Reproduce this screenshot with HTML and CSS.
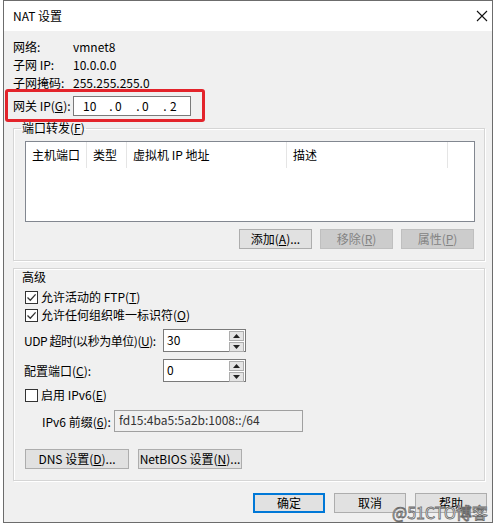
FILE: index.html
```html
<!DOCTYPE html>
<html lang="zh-CN">
<head>
<meta charset="utf-8">
<title>NAT 设置</title>
<link rel="stylesheet" href="styles.css">
</head>
<body>
<div class="window">
  <div class="titlebar">
    <span class="title">NAT 设置</span>
    <svg class="close" width="12" height="12" viewBox="0 0 12 12"><path d="M1 1 L11 11 M11 1 L1 11" stroke="#111" stroke-width="1.1" fill="none"/></svg>
  </div>
  <div class="content">
    <div class="info">
      <span>网络:</span><span>vmnet8</span>
      <span>子网 IP:</span><span>10.0.0.0</span>
      <span>子网掩码:</span><span>255.255.255.0</span>
    </div>
    <div class="gateway">
      <span class="glabel">网关 IP(<u>G</u>):</span>
      <div class="ipbox">
        <span class="o1">10</span><span class="d1">.</span><span class="o2">0</span><span class="d2">.</span><span class="o3">0</span><span class="d3">.</span><span class="o4">2</span>
      </div>
    </div>
    <fieldset class="group ports">
      <legend>端口转发(<u>F</u>)</legend>
      <div class="list">
        <div class="lhead">
          <span class="c1">主机端口</span><span class="c2">类型</span><span class="c3">虚拟机 IP 地址</span><span class="c4">描述</span>
        </div>
      </div>
      <div class="btnrow">
        <button class="btn">添加(<u>A</u>)...</button>
        <button class="btn disabled">移除(<u>R</u>)</button>
        <button class="btn disabled">属性(<u>P</u>)</button>
      </div>
    </fieldset>
    <div class="group advanced">
      <div class="glabel2">高级</div>
      <label class="check cb1"><span class="box"><svg width="11" height="11" viewBox="0 0 11 11"><path d="M1.5 5.5 L4.3 8.3 L9.6 2.4" stroke="#333" stroke-width="1.3" fill="none"/></svg></span>允许活动的 FTP(<u>T</u>)</label>
      <label class="check"><span class="box"><svg width="11" height="11" viewBox="0 0 11 11"><path d="M1.5 5.5 L4.3 8.3 L9.6 2.4" stroke="#333" stroke-width="1.3" fill="none"/></svg></span>允许任何组织唯一标识符(<u>O</u>)</label>
      <div class="spinrow udp">
        <span class="slabel tight">UDP 超时(以秒为单位)(<u>U</u>):</span>
        <div class="spin"><span class="sval">30</span><div class="arrows"><span class="arr"><svg width="7" height="4" viewBox="0 0 7 4"><path d="M0 4 L3.5 0 L7 4 Z" fill="#222"/></svg></span><span class="arr"><svg width="7" height="4" viewBox="0 0 7 4"><path d="M0 0 L3.5 4 L7 0 Z" fill="#222"/></svg></span></div></div>
      </div>
      <div class="spinrow port">
        <span class="slabel">配置端口(<u>C</u>):</span>
        <div class="spin"><span class="sval">0</span><div class="arrows"><span class="arr"><svg width="7" height="4" viewBox="0 0 7 4"><path d="M0 4 L3.5 0 L7 4 Z" fill="#222"/></svg></span><span class="arr"><svg width="7" height="4" viewBox="0 0 7 4"><path d="M0 0 L3.5 4 L7 0 Z" fill="#222"/></svg></span></div></div>
      </div>
      <label class="check cb3"><span class="box"></span>启用 IPv6(<u>E</u>)</label>
      <div class="prefixrow">
        <span class="plabel">IPv6 前缀(<u>6</u>):</span>
        <div class="pbox">fd15:4ba5:5a2b:1008::/64</div>
      </div>
      <div class="btnrow2">
        <button class="btn wide">DNS 设置(<u>D</u>)...</button>
        <button class="btn wide">NetBIOS 设置(<u>N</u>)...</button>
      </div>
    </div>
    <div class="footer">
      <button class="btn fbtn default">确定</button>
      <button class="btn fbtn">取消</button>
      <button class="btn fbtn">帮助</button>
    </div>
  </div>
  <div class="redmark"></div>
  <div class="watermark">@51CTO博客</div>
</div>
</body>
</html>
```
FILE: styles.css
```css
* { box-sizing: border-box; }
html, body { margin: 0; padding: 0; background: #ffffff; }
body {
  font-family: "Noto Sans CJK SC", "Noto Sans", sans-serif;
  font-size: 12px;
  color: #000;
}
u { text-decoration: underline; text-underline-offset: 1px; }
.window {
  position: relative;
  margin-left: 3px;
  width: 490px;
  height: 523px;
  border: 1px solid #6c6c6c;
  background: #f0f0f0;
  display: flex;
  flex-direction: column;
}
.titlebar {
  height: 30px;
  flex: none;
  background: #ffffff;
  display: flex;
  align-items: center;
  justify-content: space-between;
  padding-left: 9px;
  padding-right: 4px;
}
.title { font-size: 12px; line-height: 16px; }
.close { display: block; }
.content {
  padding: 7px 0 0 9px;
  display: flex;
  flex-direction: column;
}
.info {
  display: grid;
  grid-template-columns: 60px auto;
  grid-auto-rows: 18px;
  line-height: 18px;
}
.gateway {
  margin-top: 4px;
  height: 20px;
  display: flex;
  align-items: center;
}
.glabel { width: 60px; line-height: 20px; }
.ipbox {
  width: 118px;
  height: 20px;
  background: #fff;
  border: 1px solid #7a7a7a;
  display: flex;
  align-items: center;
  padding-left: 9px;
  line-height: 18px;
}
.ipbox span { display: block; }
.o1 { width: 24px; }
.d1 { width: 8px; text-align: center; }
.o2 { width: 19px; }
.d2 { width: 8px; text-align: center; }
.o3 { width: 18px; }
.d3 { width: 10px; text-align: center; }
.group {
  width: 472px;
  border: 1px solid #d5d5d5;
  box-shadow: inset 1px 1px 0 #ffffff, 1px 1px 0 #ffffff;
}
fieldset.ports {
  margin: 4px 0 0 0;
  padding: 5px 9px 11px 11px;
  min-width: 0;
}
.ports legend {
  margin-left: -4px;
  padding: 0 1px;
  line-height: 16px;
}
.list {
  width: 450px;
  height: 81px;
  background: #fff;
  border: 1px solid #828790;
}
.lhead {
  display: flex;
  height: 26px;
  line-height: 26px;
}
.lhead span {
  display: block;
  padding-left: 6px;
  border-right: 1px solid #e5e5e5;
}
.c1 { width: 61px; }
.c2 { width: 40px; }
.c3 { width: 160px; }
.c4 { width: 161px; }
.btnrow {
  margin-top: 7px;
  margin-right: 1px;
  display: flex;
  justify-content: flex-end;
  gap: 8px;
}
.btn {
  font-family: inherit;
  font-size: 12px;
  color: #000;
  height: 20px;
  width: 73px;
  padding: 0;
  line-height: 18px;
  background: #e1e1e1;
  border: 1px solid #adadad;
  border-radius: 0;
  white-space: nowrap;
}
.btn.disabled {
  background: #cccccc;
  border-color: #bfbfbf;
  color: #838383;
}
.advanced {
  margin-top: 7px;
  padding: 0 0 11px 11px;
  display: flex;
  flex-direction: column;
}
.glabel2 {
  line-height: 16px;
  margin-left: -3px;
}
.check {
  display: flex;
  align-items: center;
  height: 18px;
  line-height: 18px;
}
.check.cb1 { margin-top: 3px; }
.check.cb3 { margin-top: 4px; }
.box {
  width: 13px;
  height: 13px;
  border: 1px solid #333;
  background: #fff;
  margin-right: 3px;
  display: flex;
  align-items: center;
  justify-content: center;
}
.box svg { display: block; }
.spinrow {
  display: flex;
  align-items: center;
  height: 23px;
  margin-left: -1px;
}
.spinrow.udp { margin-top: 5px; }
.spinrow.port { margin-top: 7px; }
.slabel { width: 139px; flex: none; white-space: nowrap; }
.slabel.tight { letter-spacing: -0.45px; }
.spin {
  width: 83px;
  height: 23px;
  background: #fff;
  border: 1px solid #7a7a7a;
  display: flex;
  align-items: flex-start;
  justify-content: space-between;
}
.sval { padding: 2px 0 0 3px; line-height: 16px; }
.arrows {
  width: 16px;
  padding: 1px 1px 0 0;
  display: flex;
  flex-direction: column;
  gap: 1px;
}
.arr {
  height: 10px;
  border: 1px solid #adadad;
  background: #e5e5e5;
  display: flex;
  align-items: center;
  justify-content: center;
}
.arr svg { display: block; }
.prefixrow {
  margin-top: 6px;
  display: flex;
  align-items: center;
  height: 22px;
  padding-left: 17px;
}
.plabel { width: 72px; flex: none; white-space: nowrap; }
.pbox {
  width: 189px;
  height: 22px;
  border: 1px solid #a0a0a0;
  background: #f0f0f0;
  color: #333;
  padding-left: 4px;
  line-height: 18px;
}
.btnrow2 {
  margin-top: 17px;
  display: flex;
  gap: 9px;
}
.btn.wide { width: 104px; }
.footer {
  margin-top: 12px;
  margin-right: 5px;
  display: flex;
  justify-content: flex-end;
  gap: 9px;
}
.btn.fbtn { width: 72px; }
.btn.default { border: 2px solid #0078d7; line-height: 16px; }
.redmark {
  position: absolute;
  left: 1px;
  top: 88px;
  width: 200px;
  height: 33px;
  border: 3px solid #e3242b;
  border-radius: 3px;
}
.watermark {
  position: absolute;
  left: 388px;
  top: 501px;
  font-size: 16px;
  line-height: 20px;
  color: #ffffff;
  -webkit-text-stroke: 0.8px #6a6a6a;
  font-family: "Noto Sans CJK SC", "Noto Sans", sans-serif;
}
```
